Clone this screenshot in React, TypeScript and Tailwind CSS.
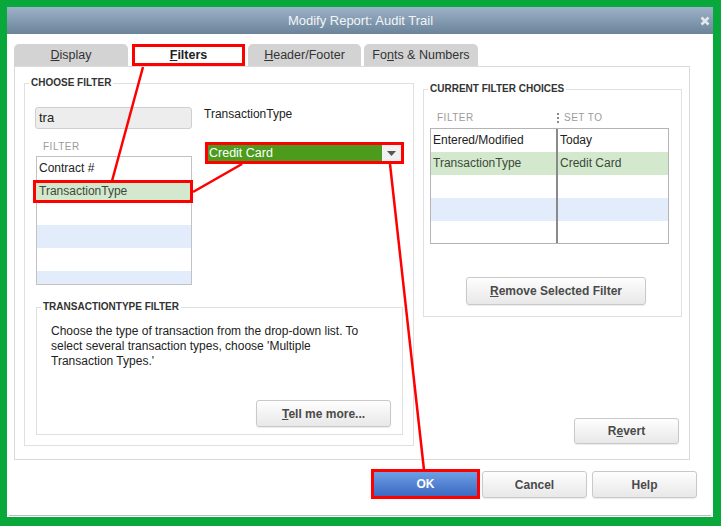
import React from 'react'

const rows = ['white', 'green', 'white', 'blue', 'white']

function GroupLabel({ children }: { children: React.ReactNode }) {
  return (
    <span className="absolute -top-[7px] left-[4px] bg-white px-[2px] text-[10px] font-bold leading-[12px] text-[#333]">
      {children}
    </span>
  )
}

function Btn({ children, className = '' }: { children: React.ReactNode; className?: string }) {
  return (
    <button
      className={`flex items-center justify-center rounded-[3px] border border-[#c9c9c9] bg-linear-to-b from-[#fefefe] to-[#e8e8e8] text-[12px] font-bold text-[#4a4a4a] shadow-[0_1px_1px_rgba(0,0,0,0.08)] ${className}`}
    >
      {children}
    </button>
  )
}

function rowClass(c: string) {
  if (c === 'green') return 'bg-[#d3e8cd] text-[#3a4a3a]'
  if (c === 'blue') return 'bg-[#e2ecfa]'
  return ''
}

export default function App() {
  return (
    <div className="relative w-[721px] h-[526px] bg-[#08a83a] pt-[7px] pl-[7px] pr-[8px] pb-[9px] font-['Liberation_Sans',Arial,sans-serif]">
      <div className="h-full bg-white flex flex-col">
        {/* title bar */}
        <div className="h-[27px] flex items-center bg-linear-to-b from-[#9cb2c8] to-[#6b8499]">
          <div className="flex-1 pl-[14px] text-center text-[13px] text-[#f2f5f8]">Modify Report: Audit Trail</div>
          <svg width="10" height="10" viewBox="0 0 10 10" className="mr-[3px]">
            <path d="M1.5 1.5 L8.5 8.5 M8.5 1.5 L1.5 8.5" stroke="#e4e8ec" strokeWidth="2.6" />
          </svg>
        </div>

        <div className="px-[7px]">
          {/* tabs */}
          <div className="mt-[10px] flex h-[22px] text-[12.5px] text-[#333]">
            <div className="w-[114px] rounded-t-[5px] bg-[#d3d3d3] flex items-center justify-center">
              <span><u>D</u>isplay</span>
            </div>
            <div className="ml-[4px] w-[113px] border-[3px] border-[#f00] bg-white flex items-center justify-center font-bold text-[#222]">
              <span><u>F</u>ilters</span>
            </div>
            <div className="ml-[3px] w-[113px] rounded-t-[5px] bg-[#d3d3d3] flex items-center justify-center">
              <span><u>H</u>eader/Footer</span>
            </div>
            <div className="ml-[3px] w-[114px] rounded-t-[5px] bg-[#d3d3d3] flex items-center justify-center">
              <span>Fo<u>n</u>ts &amp; Numbers</span>
            </div>
          </div>

          {/* tab panel */}
          <div className="w-[676px] h-[394px] border border-[#dadada] flex pl-[9px] pt-[16px]">
            {/* choose filter */}
            <div className="relative w-[390px] h-[363px] border border-[#e0e0e0] pl-[10px] pt-[23px] flex flex-col">
              <GroupLabel>CHOOSE FILTER</GroupLabel>
              <div className="flex">
                <div className="w-[157px]">
                  <div className="h-[22px] rounded-[3px] border border-[#cfcfcf] bg-[#ededed] pl-[3px] text-[13px] leading-[20px] text-[#222]">
                    tra
                  </div>
                  <div className="mt-[12px] pl-[8px] text-[10px] leading-[12px] tracking-[0.5px] text-[#9c9c9c]">FILTER</div>
                  <div className="mt-[3px] ml-[1px] w-[156px] h-[129px] border border-[#c2c2c2] text-[12px] text-[#222]">
                    <div className="h-[23px] pl-[2px] leading-[23px]">Contract #</div>
                    <div className="-ml-[4px] -mr-[2px] h-[23px] border-[3px] border-[#f00] bg-[#d3e8cd] pl-[3px] leading-[17px] text-[#3a4a3a]">
                      TransactionType
                    </div>
                    <div className="h-[22px]" />
                    <div className="h-[23px] bg-[#e2ecfa]" />
                    <div className="h-[23px]" />
                    <div className="h-[13px] bg-[#e2ecfa]" />
                  </div>
                </div>
                <div className="ml-[12px] flex-1">
                  <div className="text-[12px] leading-[14px] text-[#222]">TransactionType</div>
                  <div className="mt-[21px] ml-[1px] w-[199px] h-[22px] border-[3px] border-[#f00] flex">
                    <div className="flex-1 bg-[#4d9b1d] pl-[1px] text-[12.5px] leading-[16px] text-white">Credit Card</div>
                    <div className="w-[19px] bg-[#f1f1f1] flex items-center justify-center">
                      <svg width="9" height="5" viewBox="0 0 9 5">
                        <path d="M0 0 H9 L4.5 5 Z" fill="#555" />
                      </svg>
                    </div>
                  </div>
                </div>
              </div>

              {/* description group */}
              <div className="relative mt-[22px] ml-[1px] w-[367px] h-[128px] border border-[#e0e0e0] flex flex-col">
                <GroupLabel>TRANSACTIONTYPE FILTER</GroupLabel>
                <p className="pl-[14px] pr-[31px] pt-[16px] text-[12px] leading-[15px] text-[#222]">
                  Choose the type of transaction from the drop-down list. To select several transaction types, choose 'Multiple
                  Transaction Types.'
                </p>
                <Btn className="mt-auto mb-[7px] mr-[11px] self-end w-[135px] h-[27px]">
                  <span><u>T</u>ell me more...</span>
                </Btn>
              </div>
            </div>

            {/* right column */}
            <div className="ml-[9px] flex flex-col">
              <div className="relative mt-[6px] w-[259px] h-[228px] border border-[#e0e0e0] pl-[6px] pt-[22px] flex flex-col">
                <GroupLabel>CURRENT FILTER CHOICES</GroupLabel>
                <div className="flex h-[12px] items-center text-[10px] leading-[12px] tracking-[0.5px] text-[#9c9c9c]">
                  <span className="pl-[7px] w-[125px]">FILTER</span>
                  <svg width="8" height="12" viewBox="0 0 8 12">
                    <rect x="2" y="1" width="2" height="2" fill="#8a8a8a" />
                    <rect x="2" y="5" width="2" height="2" fill="#8a8a8a" />
                    <rect x="2" y="9" width="2" height="2" fill="#8a8a8a" />
                  </svg>
                  <span className="pl-[1px]">SET TO</span>
                </div>
                <div className="mt-[4px] w-[239px] h-[116px] border border-[#b4b4b4] flex text-[12px] text-[#222]">
                  <div className="w-[127px] border-r-2 border-[#8a8a8a]">
                    {rows.map((c, i) => (
                      <div key={i} className={`h-[23px] pl-[2px] leading-[23px] ${rowClass(c)}`}>
                        {i === 0 ? 'Entered/Modified' : i === 1 ? 'TransactionType' : ''}
                      </div>
                    ))}
                  </div>
                  <div className="flex-1">
                    {rows.map((c, i) => (
                      <div key={i} className={`h-[23px] pl-[2px] leading-[23px] ${rowClass(c)}`}>
                        {i === 0 ? 'Today' : i === 1 ? 'Credit Card' : ''}
                      </div>
                    ))}
                  </div>
                </div>
                <Btn className="mt-[33px] ml-[36px] w-[180px] h-[28px]">
                  <span><u>R</u>emove Selected Filter</span>
                </Btn>
              </div>
              <Btn className="mt-[101px] self-end mr-[3px] w-[105px] h-[26px]">
                <span>R<u>e</u>vert</span>
              </Btn>
            </div>
          </div>
        </div>

        {/* dialog buttons */}
        <div className="mt-[9px] flex justify-end pr-[16px]">
          <button className="w-[109px] h-[30px] border-[3px] border-[#f00] bg-linear-to-b from-[#6d9fe4] to-[#3d69c3] text-[12px] font-bold text-white">
            OK
          </button>
          <Btn className="ml-[2px] mt-[2px] w-[105px] h-[27px]">Cancel</Btn>
          <Btn className="ml-[5px] mt-[2px] w-[105px] h-[27px]">Help</Btn>
        </div>

        <div className="mt-auto mb-[1px] mx-[2px] h-px bg-[#bcbcbc]" />
      </div>

      {/* annotation lines */}
      <svg className="pointer-events-none absolute inset-0" width="721" height="526">
        <g stroke="#f00" strokeWidth="2.5" fill="none">
          <line x1="143" y1="67" x2="112" y2="181" />
          <line x1="193" y1="192" x2="242" y2="164" />
          <line x1="390" y1="164" x2="424" y2="470" />
        </g>
      </svg>
    </div>
  )
}
